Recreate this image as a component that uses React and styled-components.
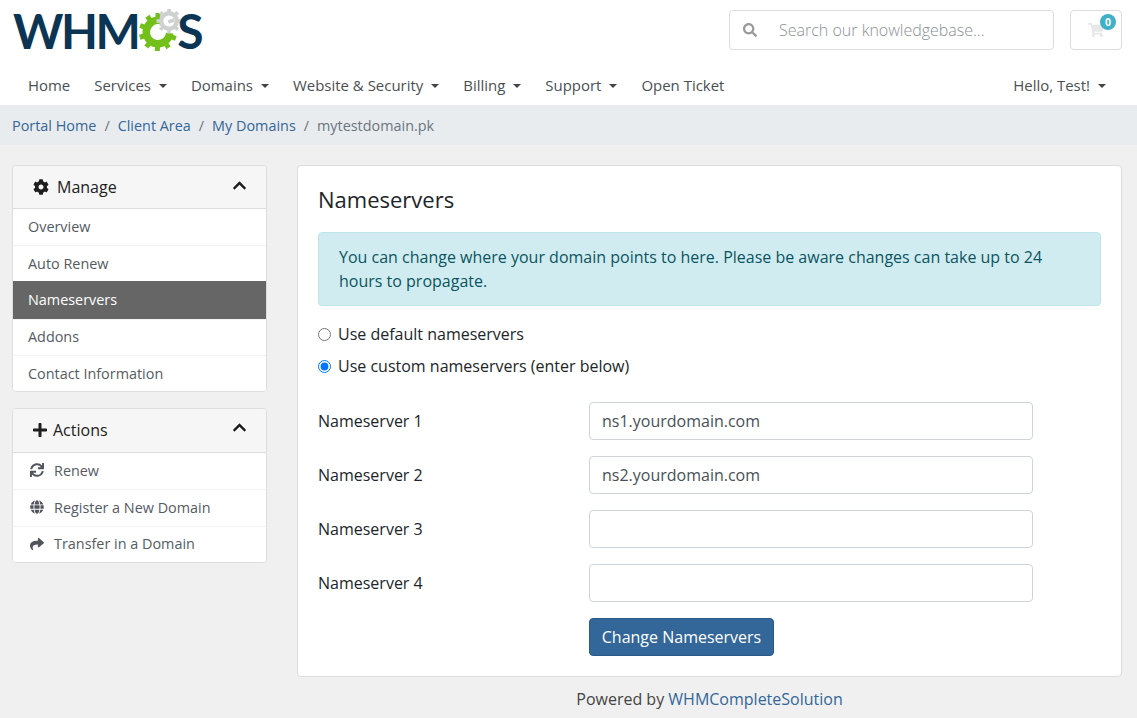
import React from "react";
import styled, { createGlobalStyle } from "styled-components";
import { FaCog, FaPlus, FaChevronUp, FaSync, FaGlobe, FaShare, FaSearch, FaShoppingCart } from "react-icons/fa";

const Global = createGlobalStyle`
  html, body { margin: 0; padding: 0; background: #f0f0f0; height: 718px; overflow: hidden; }
  * { box-sizing: border-box; }
  body { font-family: "Open Sans", "Liberation Sans", sans-serif; font-size: 16px; color: #212529; }
  ::placeholder { color: #8b9095; opacity: 1; font-weight: 300; }
`;

const Header = styled.header`
  background: #fff;
  padding: 10px 15px 0 12px;
  height: 105px;
`;
const TopRow = styled.div`
  display: flex;
  align-items: flex-start;
  justify-content: space-between;
  height: 60px;
`;
const Logo = styled.div`
  display: flex;
  align-items: center;
  height: 44px;
  margin-top: -1px;
  font-family: "Lato", "Open Sans", sans-serif;
  font-weight: 700;
  font-size: 48px;
  letter-spacing: -2.5px;
  line-height: 44px;
  color: #0c3453;
  margin-left: 1px;
`;
const LogoGear = styled.svg`
  width: 46px;
  height: 44px;
  margin: 0 -7px 0 0;
  flex: none;
`;
const TopTools = styled.div`
  display: flex;
  gap: 16px;
`;
const Search = styled.div`
  display: flex;
  align-items: center;
  width: 325px;
  height: 40px;
  border: 1px solid #ddd;
  border-radius: 4px;
  padding-left: 13px;
  color: #999;
  font-size: 14px;
`;
const SearchInput = styled.input`
  border: 0;
  outline: 0;
  background: transparent;
  flex: 1;
  min-width: 0;
  margin-left: 20px;
  font: 300 16px "Open Sans", sans-serif;
`;
const CartButton = styled.div`
  position: relative;
  width: 52px;
  height: 40px;
  border: 1px solid #ddd;
  border-radius: 4px;
  display: flex;
  align-items: center;
  padding-left: 17px;
  color: #e8e8e8;
  font-size: 16px;
`;
const CartBadge = styled.span`
  position: absolute;
  top: 3px;
  right: 5px;
  width: 16px;
  height: 16px;
  border-radius: 50%;
  background: #3fb0c6;
  color: #fff;
  font-size: 10.5px;
  font-weight: 700;
  line-height: 16px;
  text-align: center;
`;
const Nav = styled.nav`
  display: flex;
  align-items: center;
  justify-content: space-between;
  height: 31px;
`;
const NavGroup = styled.div`
  display: flex;
  align-items: center;
`;
const NavItem = styled.a`
  padding: 0 16px;
  margin-right: ${(p) => (p.$tight ? "-8px" : "0")};
  font-size: 14.96px;
  color: #4a4f54;
  white-space: nowrap;
  line-height: 31px;
  ${(p) => p.$caret && `
    &::after {
      content: "";
      display: inline-block;
      margin-left: 8px;
      vertical-align: 3px;
      border-top: 4.5px solid #444;
      border-left: 4.5px solid transparent;
      border-right: 4.5px solid transparent;
    }
  `}
`;
const Crumbs = styled.ol`
  display: flex;
  align-items: center;
  margin: 0;
  list-style: none;
  height: 40px;
  background: #e9ecef;
  padding: 0 12px;
  font-size: 14.4px;
`;
const Crumb = styled.li`
  color: ${(p) => (p.$active ? "#6c757d" : "#336699")};
  &:not(:first-child)::before {
    content: "/";
    color: #6c757d;
    padding: 0 8px;
  }
`;
const Body = styled.div`
  display: grid;
  grid-template-columns: 255px 825px;
  gap: 30px;
  padding: 20px 15px 0 12px;
  align-items: start;
`;
const Sidebar = styled.aside`
  display: flex;
  flex-direction: column;
  gap: 16px;
`;
const Panel = styled.section`
  background: #fff;
  border: 1px solid #ddd;
  border-radius: 4px;
  overflow: hidden;
`;
const PanelHead = styled.div`
  display: flex;
  align-items: center;
  height: ${(p) => p.$h}px;
  padding: 0 19px ${(p) => (p.$raised ? "2px" : "0")} 20px;
  background: #f6f6f6;
  border-bottom: 1px solid #ddd;
  font-size: 16px;
  color: #222;
`;
const HeadIcon = styled.span`
  display: inline-flex;
  width: ${(p) => (p.$narrow ? 21 : 24)}px;
  margin-left: ${(p) => (p.$narrow ? "-1px" : "0")};
  font-size: 16px;
  color: #1e1e1e;
`;
const HeadTitle = styled.span`
  flex: 1;
`;
const Collapse = styled.span`
  display: inline-flex;
  font-size: 15px;
  color: #1c1c1c;
  margin-top: -4px;
`;
const Item = styled.div`
  display: flex;
  align-items: center;
  height: ${(p) => (p.$active ? 38 : p.$last ? 35.9 : 36.4)}px;
  margin-top: ${(p) => (p.$active ? "-1px" : "0")};
  padding: 0 15px ${(p) => (p.$action ? "2px" : "1px")};
  font-size: 14.4px;
  color: ${(p) => (p.$active ? "#fff" : "#555b63")};
  font-weight: ${(p) => (p.$active ? 500 : 400)};
  background: ${(p) => (p.$active ? "#666" : "#fff")};
  border-top: ${(p) => (p.$first || p.$active ? "0" : "1px solid #f3f3f3")};
`;
const ItemIcon = styled.span`
  display: inline-flex;
  width: 14px;
  margin: 0 10px 0 2px;
  font-size: 14px;
  color: #50555c;
`;
const Main = styled.main`
  display: flex;
  flex-direction: column;
`;
const Card = styled.section`
  background: #fff;
  border: 1px solid #ddd;
  border-radius: 4px;
  padding: 20px;
  height: 512px;
`;
const Title = styled.h3`
  margin: 0 0 20px;
  font-size: 22px;
  font-weight: 400;
  line-height: 26px;
  color: #212529;
`;
const Alert = styled.div`
  background: #d1ecf1;
  border: 1px solid #bee5eb;
  border-radius: 4px;
  color: #0c5460;
  padding: 12px 20px;
  font-size: 16px;
  line-height: 24px;
  height: 74px;
  margin-bottom: 12px;
`;
const RadioRow = styled.label`
  display: flex;
  align-items: center;
  height: 32px;
  font-size: 16px;
  color: #212529;
`;
const Radio = styled.input`
  margin: 0 7px 0 0;
  width: 13px;
  height: 13px;
`;
const Fields = styled.div`
  display: flex;
  flex-direction: column;
  gap: 16px;
  margin-top: 20px;
`;
const Field = styled.div`
  display: grid;
  grid-template-columns: 271px 444px;
  align-items: center;
`;
const FieldLabel = styled.label`
  font-size: 16px;
  color: #212529;
`;
const TextInput = styled.input`
  height: 38px;
  width: 100%;
  border: 1px solid #ced4da;
  border-radius: 4px;
  padding: 0 12px;
  font: 400 16px "Open Sans", sans-serif;
  color: #495057;
  background: #fff;
`;
const Submit = styled.button`
  display: block;
  margin: 16px 0 0 271px;
  height: 38px;
  width: 185px;
  background: #336699;
  border: 1px solid #2c5a88;
  border-radius: 4px;
  color: #fff;
  font: 400 16px "Open Sans", sans-serif;
  padding: 0;
`;
const Footer = styled.footer`
  text-align: center;
  font-size: 16px;
  line-height: 24px;
  margin-top: 10px;
  color: #444;
`;
const FooterLink = styled.a`
  color: #336699;
`;

const GearLogo = () => {
  const tooth = (cx, cy, r, deg, w, h) => (
    <rect key={deg} x={cx - w / 2} y={cy - r - h} width={w} height={h + 2} transform={`rotate(${deg} ${cx} ${cy})`} />
  );
  return (
    <LogoGear viewBox="0 0 46 44" aria-hidden="true">
      <g fill="#74c01a">
        {[0, 110, 146, 182, 218, 254, 290, 326].map((d) => tooth(20, 23, 15, d, 5, 4))}
        <path d="M24 8 A15.5 15.5 0 1 0 35.4 24.4 L28 23.7 A8 8 0 1 1 22.1 15.3 Z" />
      </g>
      <g fill="#cfd1d1">
        {[0, 45, 90, 135, 180, 225, 270, 315].map((d) => tooth(31, 12, 9.5, d, 3.6, 3))}
        <circle cx="31" cy="12" r="10" />
        <circle cx="31" cy="12" r="5.6" fill="#fff" />
        <path d="M29.5 11.5 L36 9 L36.6 13 L31 14.5 Z" />
      </g>
    </LogoGear>
  );
};

const manage = ["Overview", "Auto Renew", "Nameservers", "Addons", "Contact Information"];
const actions = [
  [FaSync, "Renew"],
  [FaGlobe, "Register a New Domain"],
  [FaShare, "Transfer in a Domain"],
];
const navs = [
  ["Home", false],
  ["Services", true],
  ["Domains", true],
  ["Website & Security", true],
  ["Billing", true],
  ["Support", true],
  ["Open Ticket", false],
];
const servers = ["ns1.yourdomain.com", "ns2.yourdomain.com", "", ""];

export default function App() {
  return (
    <>
      <Global />
      <Header>
        <TopRow>
          <Logo>
            WHM
            <GearLogo />
            S
          </Logo>
          <TopTools>
            <Search>
              <FaSearch />
              <SearchInput placeholder="Search our knowledgebase..." />
            </Search>
            <CartButton>
              <FaShoppingCart />
              <CartBadge>0</CartBadge>
            </CartButton>
          </TopTools>
        </TopRow>
        <Nav>
          <NavGroup>
            {navs.map(([label, caret]) => (
              <NavItem key={label} $caret={caret} $tight>
                {label}
              </NavItem>
            ))}
          </NavGroup>
          <NavItem $caret>Hello, Test!</NavItem>
        </Nav>
      </Header>
      <Crumbs>
        <Crumb>Portal Home</Crumb>
        <Crumb>Client Area</Crumb>
        <Crumb>My Domains</Crumb>
        <Crumb $active>mytestdomain.pk</Crumb>
      </Crumbs>
      <Body>
        <Sidebar>
          <Panel>
            <PanelHead $h={43}>
              <HeadIcon><FaCog /></HeadIcon>
              <HeadTitle>Manage</HeadTitle>
              <Collapse><FaChevronUp /></Collapse>
            </PanelHead>
            {manage.map((m, i) => (
              <Item key={m} $first={i === 0} $last={i === manage.length - 1} $active={m === "Nameservers"}>{m}</Item>
            ))}
          </Panel>
          <Panel>
            <PanelHead $h={44} $raised>
              <HeadIcon $narrow><FaPlus /></HeadIcon>
              <HeadTitle>Actions</HeadTitle>
              <Collapse><FaChevronUp /></Collapse>
            </PanelHead>
            {actions.map(([Icon, label], i) => (
              <Item key={label} $first={i === 0} $action>
                <ItemIcon><Icon /></ItemIcon>
                {label}
              </Item>
            ))}
          </Panel>
        </Sidebar>
        <Main>
          <Card>
            <Title>Nameservers</Title>
            <Alert>
              You can change where your domain points to here. Please be aware changes can take up to 24 hours to propagate.
            </Alert>
            <RadioRow>
              <Radio type="radio" name="ns" />
              Use default nameservers
            </RadioRow>
            <RadioRow>
              <Radio type="radio" name="ns" defaultChecked />
              Use custom nameservers (enter below)
            </RadioRow>
            <Fields>
              {servers.map((v, i) => (
                <Field key={i}>
                  <FieldLabel>Nameserver {i + 1}</FieldLabel>
                  <TextInput defaultValue={v} />
                </Field>
              ))}
            </Fields>
            <Submit>Change Nameservers</Submit>
          </Card>
          <Footer>
            Powered by <FooterLink>WHMCompleteSolution</FooterLink>
          </Footer>
        </Main>
      </Body>
    </>
  );
}
